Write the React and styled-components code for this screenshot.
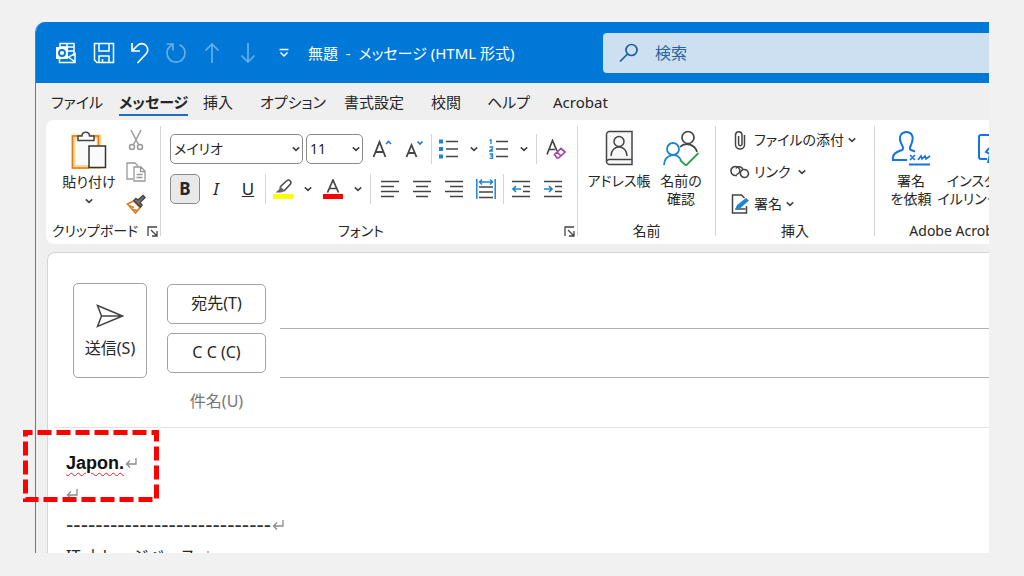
import React from 'react';
import styled, { createGlobalStyle, css } from 'styled-components';

const GlobalStyle = createGlobalStyle`
  * {
    box-sizing: border-box;
  }
  body {
    margin: 0;
    background: #f1f1f1;
  }
  button, input, select {
    font: inherit;
    color: inherit;
    margin: 0;
    padding: 0;
    border: 0;
    background: none;
  }
`;

const Page = styled.div`
  position: relative;
  display: flex;
  height: 100vh;
  padding: 22px 35px 23px;
  background: #f1f1f1;
  color: #262626;
  font-family: 'Noto Sans', 'Noto Sans CJK JP', sans-serif;
  font-feature-settings: 'palt';
  font-size: 15px;
  line-height: 20px;
`;

const Window = styled.div`
  flex: 1;
  min-width: 0;
  display: flex;
  flex-direction: column;
  overflow: hidden;
  border-left: 1px solid #2b88d8;
  border-top-left-radius: 10px;
  background: #efefef;
  white-space: nowrap;
`;

/* title bar */

const TitleBar = styled.header`
  display: flex;
  flex: none;
  align-items: center;
  height: 61px;
  padding-left: 12px;
  background: #0078d7;
  color: #fff;
`;

const QuickButton = styled.button`
  display: flex;
  align-items: center;
  justify-content: center;
  width: 36px;
  height: 36px;
  opacity: ${props => (props.disabled ? 0.4 : 1)};
`;

const AppButton = styled(QuickButton)`
  justify-content: flex-start;
  width: 38px;
  padding-left: 7px;
`;

const WindowTitle = styled.h1`
  flex: none;
  width: 301px;
  margin: 0;
  padding-left: 6px;
  font-size: 15px;
  font-weight: 400;
  white-space: pre;
`;

const Search = styled.label`
  display: flex;
  flex: 1;
  align-items: center;
  gap: 16px;
  height: 40px;
  padding-left: 16px;
  border-radius: 4px 0 0 4px;
  background: #cce0f1;
  color: #1f5f9c;
  input {
    flex: 1;
    min-width: 0;
    font-size: 16px;
  }
  input::placeholder {
    color: #2a659b;
    opacity: 1;
  }
`;

/* tabs */

const Tabs = styled.nav`
  display: grid;
  flex: none;
  grid-template-columns: 68px 84px 57px 84px 87px 56px 66px 1fr;
  justify-items: start;
  height: 37px;
  padding: 9px 0 0 15px;
`;

const Tab = styled.a`
  height: 24px;
  color: inherit;
  text-decoration: none;
  ${props => props.$active && css`
    border-bottom: 2px solid #1a6fc4;
    font-weight: 700;
  `}
`;

/* ribbon */

const Ribbon = styled.div`
  display: flex;
  flex: none;
  height: 124px;
  margin-left: 10px;
  border-radius: 8px 0 0 8px;
  background: #fff;
`;

const Group = styled.section`
  display: flex;
  flex: none;
  flex-direction: column;
  width: ${props => props.$width}px;
  padding: 0 0 3px;
`;

const GroupBody = styled.div`
  display: flex;
  flex: 1;
  min-height: 0;
  padding: ${props => props.$pad};
`;

const GroupFooter = styled.footer`
  display: flex;
  flex: none;
  align-items: center;
  height: 20px;
  font-size: 14px;
  text-align: center;
  span {
    flex: 1;
  }
`;

const LauncherButton = styled.button`
  display: flex;
  align-items: center;
  justify-content: center;
  width: 16px;
  height: 20px;
`;

const Divider = styled.div`
  flex: none;
  width: 1px;
  margin: 6px 0 8px;
  background: #d4d4d4;
`;

const BigButton = styled.button`
  display: flex;
  flex: none;
  flex-direction: column;
  align-items: center;
  width: ${props => props.$width}px;
  font-size: 14px;
  line-height: 18px;
  span {
    margin-top: 6px;
  }
`;

const PasteButton = styled(BigButton)`
  padding-top: 6px;
  span {
    margin: 4px 0 6px;
  }
`;

const IconColumn = styled.div`
  display: flex;
  flex-direction: column;
  gap: 2px;
`;

const IconButton = styled.button`
  display: flex;
  align-items: center;
  justify-content: center;
  width: 28px;
  height: 30px;
`;

const FontRows = styled.div`
  display: flex;
  flex-direction: column;
  gap: 10px;
`;

const FontRow = styled.div`
  display: flex;
  height: 30px;
`;

const ToolButton = styled.button`
  display: flex;
  align-items: center;
  justify-content: center;
  width: 32px;
  height: 30px;
  font-size: 17px;
  ${props => props.$pressed && css`
    width: 30px;
    border: 1px solid #8a8a8a;
    border-radius: 5px;
    background: #e9e9e9;
    font-weight: 700;
  `}
`;

const DropButton = styled.button`
  display: flex;
  align-items: center;
  justify-content: center;
  width: 18px;
  height: 30px;
`;

const ToolDivider = styled.div`
  width: 1px;
  margin: 0 ${props => props.$gap || 1}px;
  background: #d4d4d4;
`;

const SelectBox = styled.div`
  position: relative;
  width: ${props => props.$width}px;
  margin-right: 3px;
  select {
    width: 100%;
    height: 30px;
    padding-left: 3px;
    border: 1px solid #8a8a8a;
    border-radius: 5px;
    appearance: none;
    background: #fff;
    font-size: 14px;
    font-feature-settings: 'palt';
  }
  svg {
    position: absolute;
    top: 11px;
    right: 3px;
    pointer-events: none;
  }
`;

const MenuColumn = styled.div`
  display: flex;
  flex-direction: column;
  gap: 12px;
`;

const MenuButton = styled.button`
  display: flex;
  align-items: center;
  gap: 4px;
  height: 20px;
  font-size: 14px;
`;

/* compose area */

const Compose = styled.main`
  flex: 1;
  min-height: 0;
  margin: 8px 0 0 11px;
  border: 1px solid #d6d6d6;
  border-width: 1px 0 0 1px;
  border-radius: 8px 0 0 0;
  background: #fff;
`;

const Envelope = styled.form`
  display: grid;
  grid-template-columns: 74px 1fr;
  column-gap: 20px;
  margin-left: 6px;
  padding: 27px 0 0 19px;
  border-bottom: 1px solid #e4e4e4;
  font-size: 16px;
`;

const OutlineButton = styled.button`
  border: 1px solid #a3a3a3;
  border-radius: 5px;
`;

const SendButton = styled(OutlineButton)`
  display: flex;
  flex-direction: column;
  align-items: center;
  justify-content: center;
  gap: 10px;
  height: 95px;
  margin-top: 3px;
`;

const FieldRow = styled.div`
  display: grid;
  grid-template-columns: 99px 1fr;
  column-gap: 14px;
  align-items: center;
  height: 49px;
  text-align: center;
  ${OutlineButton} {
    height: 40px;
    margin-bottom: 2px;
    padding-bottom: 2px;
  }
  label {
    margin-bottom: 4px;
    color: #777;
  }
  input {
    height: 49px;
    outline: 0;
    border-bottom: ${props => (props.$plain ? '0' : '1px solid #b0b0b0')};
  }
`;

const Editor = styled.article`
  padding: 19px 0 0 18px;
  font-size: 16px;
  font-feature-settings: normal;
`;

const Line = styled.p`
  display: flex;
  align-items: center;
  gap: 1px;
  height: 31px;
  margin: 0;
`;

const Misspelled = styled.b`
  color: #111;
  font-family: 'Liberation Sans', sans-serif;
  font-size: 18px;
  text-decoration: underline wavy #e0202a 1px;
  text-underline-offset: 3px;
`;

const Rule = styled.span`
  color: #333;
  font-family: 'Liberation Sans', sans-serif;
  font-size: 22px;
`;

const Highlight = styled.svg`
  position: absolute;
  top: 430px;
  left: 23px;
`;

const Icon = ({ w = 20, h = 20, children, ...rest }) => (
  <svg
    width={w}
    height={h}
    viewBox={`0 0 ${w} ${h}`}
    fill="none"
    stroke="#444"
    strokeWidth="1.5"
    aria-hidden="true"
    {...rest}
  >
    {children}
  </svg>
);

const Chevron = () => (
  <Icon w={8} h={8}><path d="M.8 2.300 4 5.300l3.200-3" strokeWidth="1.700" /></Icon>
);

const Launcher = () => (
  <LauncherButton type="button" aria-label="ダイアログを表示">
    <Icon w={11} h={11}><path d="M1 10V1h9M4 4l6 6M10 5v5H5" strokeWidth="1.300" /></Icon>
  </LauncherButton>
);

const Return = () => (
  <Icon w={12} h={12} stroke="#8c8c8c"><path d="M11 1v6H1.500M5 3.500 1.500 7 5 10.500" strokeWidth="1.300" /></Icon>
);

const Lines = ({ rows }) => (
  <Icon w={20} h={20}>
    {rows.map(([from, to], i) => (
      <path key={i} d={`M${from} ${2.5 + i * 5}H${to}`} />
    ))}
  </Icon>
);

const QuickAccess = () => (
  <>
    <AppButton type="button" aria-label="Outlook">
      <Icon w={22} h={22} stroke="#fff">
        <path d="M5 5V1.500h14V14M12 1.500V9M5 5h14M12 9h7" />
        <path d="M4.500 17v3.500h15.500v-9L13.500 15l6.500 5" />
        <path d="M1 5h12v12H1z" fill="#fff" stroke="none" />
        <circle cx="7" cy="11" r="3" stroke="#0078d7" strokeWidth="1.800" />
      </Icon>
    </AppButton>
    <QuickButton type="button" aria-label="保存">
      <Icon w={22} h={22} stroke="#fff">
        <path d="M1.500 1.500h19v19H4l-2.500-2.500zM6 1.500V9h10V1.500M6 20.500V14h10v6.500M9.500 20v-3" />
      </Icon>
    </QuickButton>
    <QuickButton type="button" aria-label="元に戻す">
      <Icon w={22} h={22} stroke="#fff">
        <path d="M3 1v8h8M3 9l5.500-5.500a5.800 5.800 0 0 1 8.500 0 6 6 0 0 1 0 8.500L8.500 21" strokeWidth="1.700" />
      </Icon>
    </QuickButton>
    <QuickButton type="button" aria-label="やり直し" disabled>
      <Icon w={22} h={22} stroke="#fff">
        <path d="M1.500 2H8v6.500M8 2.500C4.500 4 2 7 2 11.200a9 9 0 0 0 18 0c0-3.800-2-7-5.500-8.500" strokeWidth="1.700" />
      </Icon>
    </QuickButton>
    <QuickButton type="button" aria-label="前のアイテム" disabled>
      <Icon w={22} h={22} stroke="#fff"><path d="M11 21V2M4.500 8.500 11 2l6.500 6.500" strokeWidth="1.700" /></Icon>
    </QuickButton>
    <QuickButton type="button" aria-label="次のアイテム" disabled>
      <Icon w={22} h={22} stroke="#fff"><path d="M11 1v19M4.500 13.500 11 20l6.500-6.500" strokeWidth="1.700" /></Icon>
    </QuickButton>
    <QuickButton type="button" aria-label="クイック アクセスのカスタマイズ">
      <Icon w={10} h={10} stroke="#fff"><path d="M.5 1.500h9M1.500 4.500 5 8l3.500-3.500" /></Icon>
    </QuickButton>
  </>
);

const ClipboardGroup = () => (
  <Group $width={114}>
    <GroupBody $pad="5px 0 0 10px">
      <PasteButton type="button" $width={66}>
        <Icon w={36} h={38}>
          <path d="M3 6h25v30H3z" fill="#fff" stroke="#fbd98e" strokeWidth="5" />
          <path d="M4.500 8h21v26h-21z" fill="#fafafa" stroke="none" />
          <path d="M10 5H1.500v32H18M22 5h5.500v9" stroke="#e07a1c" strokeWidth="1.600" />
          <path d="M7 9.500V5h4c0-5 7.500-5 7.500 0H23v4.500z" fill="#fff" />
          <path d="M18 15h16.500v21.500H18z" fill="#fafafa" stroke="#333" />
        </Icon>
        <span>貼り付け</span>
        <Chevron />
      </PasteButton>
      <IconColumn>
        <IconButton type="button" aria-label="切り取り">
          <Icon w={16} h={22} stroke="#999">
            <path d="m3 1 7.500 14.500M13 1 5.500 15.500" />
            <circle cx="4" cy="18" r="2.500" />
            <circle cx="12" cy="18" r="2.500" />
          </Icon>
        </IconButton>
        <IconButton type="button" aria-label="コピー">
          <Icon w={20} h={20} stroke="#999">
            <path d="M7 17H1V1h8l3 3M8 5h7l4 4v10H8zM14.500 5v4.500H19M10.500 12.500h6M10.500 15.500h6" strokeWidth="1.300" />
          </Icon>
        </IconButton>
        <IconButton type="button" aria-label="書式のコピー">
          <Icon w={20} h={20}>
            <path d="m1.500 10 6-3 6.500 6.500-4.500 5.500z" fill="#fff" stroke="#e07a1c" strokeWidth="1.700" />
            <path d="m4 12 4 1.500M7 15.500l4 1" stroke="#e07a1c" />
            <path d="M8 6.500 14.500 13l1.500-2-2-2.500 5-5-2-2-5 4.500-2-1.500z" fill="#777" />
          </Icon>
        </IconButton>
      </IconColumn>
    </GroupBody>
    <GroupFooter>
      <span>クリップボード</span>
      <Launcher />
    </GroupFooter>
  </Group>
);

const FontGroup = () => (
  <Group $width={416}>
    <GroupBody $pad="14px 0 0 9px">
      <FontRows>
        <FontRow>
          <SelectBox $width={133}>
            <select aria-label="フォント"><option>メイリオ</option></select>
            <Chevron />
          </SelectBox>
          <SelectBox $width={57}>
            <select aria-label="フォント サイズ"><option>11</option></select>
            <Chevron />
          </SelectBox>
          <ToolButton type="button" aria-label="フォント サイズの拡大">
            <Icon w={20} h={20}>
              <path d="M1.500 18 7.500 3l6 15M3.500 13h8" strokeWidth="1.800" />
              <path d="m14 5 2.500-2.500L19 5" stroke="#1e7fc8" strokeWidth="1.700" />
            </Icon>
          </ToolButton>
          <ToolButton type="button" aria-label="フォント サイズの縮小">
            <Icon w={20} h={20}>
              <path d="M2.500 18 7.500 6l5 12M4 14h7" strokeWidth="1.800" />
              <path d="M13.500 2.500 16 5l2.500-2.500" stroke="#1e7fc8" strokeWidth="1.700" />
            </Icon>
          </ToolButton>
          <ToolDivider />
          <ToolButton type="button" aria-label="箇条書き">
            <Icon w={20} h={20}>
              <path d="M7 2.500h12M7 10h12M7 17.500h12" />
              <path d="M0 .5h4v4H0zM0 8h4v4H0zM0 15.500h4v4H0z" fill="#1e86d0" stroke="none" />
            </Icon>
          </ToolButton>
          <DropButton type="button" aria-label="行頭文字"><Chevron /></DropButton>
          <ToolButton type="button" aria-label="段落番号">
            <Icon w={20} h={20}>
              <path d="M7 2.500h12M7 10h12M7 17.500h12" />
              <path d="M.5 1.500 2 .8V5M.5 8h3v1.800L.5 12H4M.5 15h3v4.300h-3M1.500 17h2" stroke="#1e86d0" strokeWidth="1.300" />
            </Icon>
          </ToolButton>
          <DropButton type="button" aria-label="番号の種類"><Chevron /></DropButton>
          <ToolDivider $gap={3} />
          <ToolButton type="button" aria-label="書式のクリア">
            <Icon w={20} h={20}>
              <path d="M1 15.500 6.500 1.500 11 12M3 10.500h6" strokeWidth="1.700" />
              <path d="m8.500 15.500 6.500-6 4 3.500-6.500 6H11zM11 13l4 4" fill="#fff" stroke="#a044a8" strokeWidth="1.700" />
            </Icon>
          </ToolButton>
        </FontRow>
        <FontRow>
          <ToolButton type="button" $pressed>B</ToolButton>
          <ToolButton type="button"><i>I</i></ToolButton>
          <ToolButton type="button"><u>U</u></ToolButton>
          <ToolDivider />
          <ToolButton type="button" aria-label="蛍光ペンの色">
            <Icon w={20} h={20}>
              <path d="m7 8 7-6.500c2-1.500 5 1 3.500 3.500L11 12" />
              <path d="m7 7 5 5-4 1.500H2.500L6 10.500z" fill="#666" stroke="none" />
              <path d="M0 17.500h20" stroke="#ff0" strokeWidth="5" />
            </Icon>
          </ToolButton>
          <DropButton type="button" aria-label="蛍光ペンの一覧"><Chevron /></DropButton>
          <ToolButton type="button" aria-label="フォントの色">
            <Icon w={20} h={20}>
              <path d="M4.500 13.500 10 1l5.500 12.500M6.500 9.500h7" strokeWidth="1.700" />
              <path d="M0 17.500h20" stroke="#f00" strokeWidth="5" />
            </Icon>
          </ToolButton>
          <DropButton type="button" aria-label="色の一覧"><Chevron /></DropButton>
          <ToolDivider $gap={3} />
          <ToolButton type="button" aria-label="左揃え"><Lines rows={[[1, 19], [1, 14], [1, 19], [1, 14]]} /></ToolButton>
          <ToolButton type="button" aria-label="中央揃え"><Lines rows={[[1, 19], [4, 16], [1, 19], [4, 16]]} /></ToolButton>
          <ToolButton type="button" aria-label="右揃え"><Lines rows={[[1, 19], [6, 19], [1, 19], [6, 19]]} /></ToolButton>
          <ToolButton type="button" aria-label="均等割り付け">
            <Icon w={20} h={20}>
              <path d="M3 8h14M3 13h14M3 18.500h14" />
              <path d="M.8 0v20M19.200 0v20M3 3h14M6 .5 3.500 3 6 5.500M14 .5 16.500 3 14 5.500" stroke="#1e86d0" />
            </Icon>
          </ToolButton>
          <ToolDivider />
          <ToolButton type="button" aria-label="インデントを減らす">
            <Icon w={20} h={20}>
              <path d="M1 2.500h18M12 7.500h7M12 12.500h7M1 17.500h18" />
              <path d="M10 10H2M5 7l-3 3 3 3" stroke="#1e86d0" strokeWidth="1.700" />
            </Icon>
          </ToolButton>
          <ToolButton type="button" aria-label="インデントを増やす">
            <Icon w={20} h={20}>
              <path d="M1 2.500h18M12 7.500h7M12 12.500h7M1 17.500h18" />
              <path d="M1 10h8M6 7l3 3-3 3" stroke="#1e86d0" strokeWidth="1.700" />
            </Icon>
          </ToolButton>
        </FontRow>
      </FontRows>
    </GroupBody>
    <GroupFooter>
      <span>フォント</span>
      <Launcher />
    </GroupFooter>
  </Group>
);

const NamesGroup = () => (
  <Group $width={137}>
    <GroupBody $pad="10px 0 0 6px">
      <BigButton type="button" $width={70}>
        <Icon w={28} h={36}>
          <path d="M27 29.500H4a3 3 0 0 0-2.500 2.500V4A3 3 0 0 1 4 1.500h23v33H4A3 3 0 0 1 1.500 32" fill="#f8f8f8" />
          <circle cx="14" cy="11.500" r="5" />
          <path d="M6 26c0-12 16-12 16 0" />
        </Icon>
        <span>アドレス帳</span>
      </BigButton>
      <BigButton type="button" $width={54}>
        <Icon w={38} h={36}>
          <circle cx="26" cy="7.500" r="6" strokeWidth="1.700" />
          <path d="M18 17c5-5 15-3 17 5" strokeWidth="1.700" />
          <circle cx="11" cy="19" r="6" stroke="#1e86d0" strokeWidth="1.800" />
          <path d="M2 35c1-12 13-12 17-5" stroke="#1e86d0" strokeWidth="1.800" />
          <path d="m18 30 6 5.500L36.500 23" stroke="#2fa24f" strokeWidth="1.900" />
        </Icon>
        <span>名前の<br />確認</span>
      </BigButton>
    </GroupBody>
    <GroupFooter><span>名前</span></GroupFooter>
  </Group>
);

const InsertGroup = () => (
  <Group $width={158}>
    <GroupBody $pad="10px 0 0 14px">
      <MenuColumn>
        <MenuButton type="button">
          <Icon w={20} h={20}>
            <path d="M14.500 5v9.500a4.500 4.500 0 0 1-9 0V4.500a3.300 3.300 0 0 1 6.500 0v9.500a1.700 1.700 0 0 1-3.400 0V6" />
          </Icon>
          ファイルの添付 <Chevron />
        </MenuButton>
        <MenuButton type="button">
          <Icon w={20} h={20}>
            <path d="M7 13.500H5.500a4.500 4.500 0 1 1 4-6.500c1 2.500-.5 5-3 5.500" />
            <path d="M12 7.500h2.500a4 4 0 1 1-3.500 6c-1.500-2.500 0-5 2-6-1-3-6-4-7-1" />
          </Icon>
          リンク <i /><Chevron />
        </MenuButton>
        <MenuButton type="button">
          <Icon w={20} h={20}>
            <path d="M16.500 12v7H2.500V1h9l3 3" />
            <path d="M5.500 15h10" />
            <path d="m5 16 2-5 9-7 3 2.500-8.500 7.500z" fill="#1e86d0" stroke="none" />
          </Icon>
          署名 <Chevron />
        </MenuButton>
      </MenuColumn>
    </GroupBody>
    <GroupFooter><span>挿入</span></GroupFooter>
  </Group>
);

const AcrobatGroup = () => (
  <Group $width={166}>
    <GroupBody $pad="10px 0 0 7px">
      <BigButton type="button" $width={58}>
        <Icon w={40} h={36} stroke="#1473e6" strokeWidth="2">
          <path d="M16 30H2c-1-6 3-8 9-10 2-1 1-3 0-5-5-9 0-13 4.500-13S24 6 20 15c-1 2-2 4 0 5l4 1.500" />
          <path d="M18 34.500h21" />
          <path d="m19 25 5 5M24 25l-5 5M27 30l3-4 1 3 3-3 1 3 4-3" strokeWidth="1.600" />
        </Icon>
        <span>署名<br />を依頼</span>
      </BigButton>
      <BigButton type="button" $width={98}>
        <Icon w={30} h={36} stroke="#1473e6" strokeWidth="2">
          <path d="M13 29H7a2 2 0 0 1-2-2V7a2 2 0 0 1 2-2h20v9M15 18l-3 4 4 2-2 9" />
        </Icon>
        <span>インスタントフ<br />イルリンクの送信</span>
      </BigButton>
    </GroupBody>
    <GroupFooter><span>Adobe Acrobat</span></GroupFooter>
  </Group>
);

const App = () => {
  const tabs = ['ファイル', 'メッセージ', '挿入', 'オプション', '書式設定', '校閲', 'ヘルプ', 'Acrobat'];

  return (
    <Page>
      <GlobalStyle />
      <Window>
        <TitleBar>
          <QuickAccess />
          <WindowTitle>無題  -  メッセージ (HTML 形式)</WindowTitle>
          <Search>
            <Icon w={20} h={20} stroke="#1f5f9c">
              <circle cx="12.500" cy="7" r="5.500" strokeWidth="1.700" />
              <path d="M8.500 11 1 18.500" strokeWidth="1.700" />
            </Icon>
            <input type="search" placeholder="検索" aria-label="検索" />
          </Search>
        </TitleBar>

        <Tabs>
          {tabs.map(name => (
            <Tab key={name} href="#" $active={name === 'メッセージ'}>{name}</Tab>
          ))}
        </Tabs>

        <Ribbon>
          <ClipboardGroup />
          <Divider />
          <FontGroup />
          <Divider />
          <NamesGroup />
          <Divider />
          <InsertGroup />
          <Divider />
          <AcrobatGroup />
        </Ribbon>

        <Compose>
          <Envelope>
            <SendButton type="submit">
              <Icon w={28} h={24}>
                <path d="M1.500 1.500 26.500 12l-25 10.500L5.500 12zM5.500 12h21" />
              </Icon>
              送信(S)
            </SendButton>
            <div>
              <FieldRow>
                <OutlineButton type="button">宛先(T)</OutlineButton>
                <input type="text" aria-label="宛先" />
              </FieldRow>
              <FieldRow>
                <OutlineButton type="button">C C (C)</OutlineButton>
                <input type="text" aria-label="CC" />
              </FieldRow>
              <FieldRow $plain>
                <label htmlFor="subject">件名(U)</label>
                <input id="subject" type="text" />
              </FieldRow>
            </div>
          </Envelope>
          <Editor>
            <Line><Misspelled>Japon.</Misspelled><Return /></Line>
            <Line><Return /></Line>
            <Line><Rule>{'-'.repeat(28)}</Rule><Return /></Line>
            <Line>IT ナレッジベース<Return /></Line>
          </Editor>
        </Compose>
      </Window>
      <Highlight width="137" height="72" fill="none" stroke="#f00" strokeWidth="5" aria-hidden="true">
        <rect x="2.500" y="2.500" width="131" height="67" strokeDasharray="14 5" strokeDashoffset="7" />
      </Highlight>
    </Page>
  );
};

export default App;
